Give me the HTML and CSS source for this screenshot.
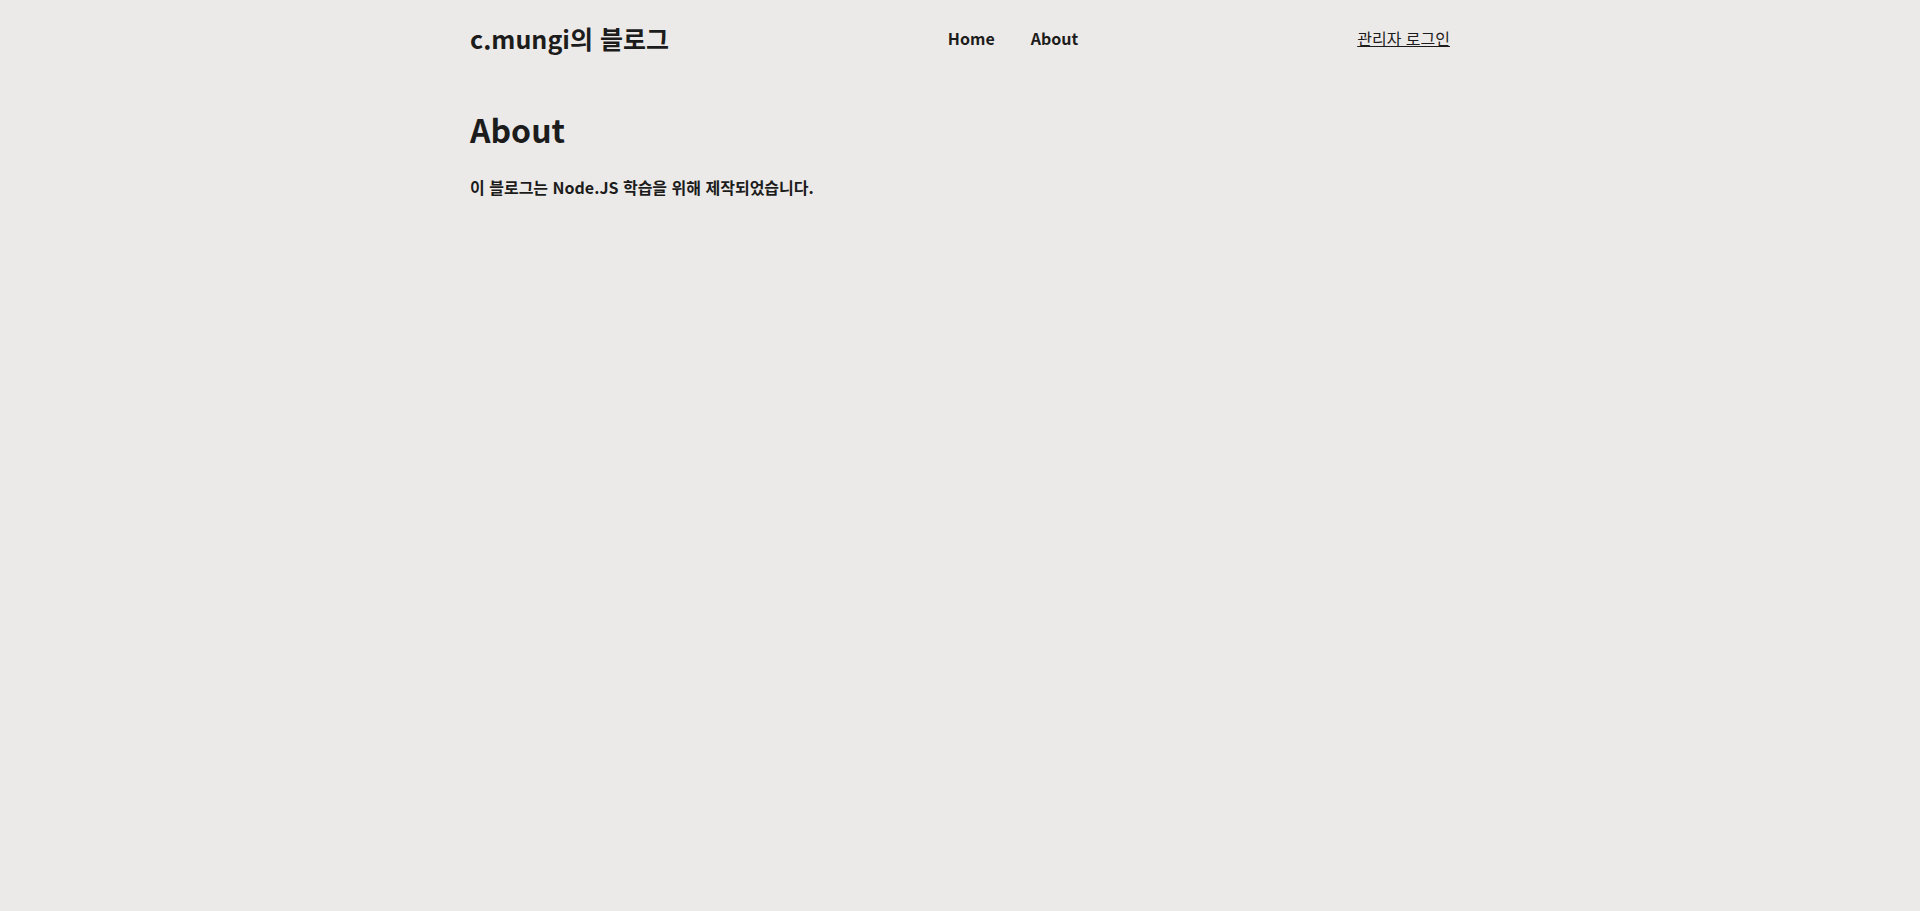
FILE: index.html
```html
<!DOCTYPE html>
<html lang="ko">
<head>
<meta charset="utf-8">
<title>About</title>
<link rel="stylesheet" href="styles.css">
</head>
<body>
<div class="container">
  <header class="header">
    <a class="logo" href="#">c.mungi의 블로그</a>
    <nav class="nav">
      <a href="#">Home</a>
      <a href="#">About</a>
    </nav>
    <a class="login" href="#">관리자 로그인</a>
  </header>
  <main class="main">
    <h1 class="title">About</h1>
    <p class="desc">이 블로그는 Node.JS 학습을 위해 제작되었습니다.</p>
  </main>
</div>
</body>
</html>
```
FILE: styles.css
```css
* { box-sizing: border-box; }
html, body { margin: 0; padding: 0; }
body {
  background: #eceae8;
  color: #1c1c1c;
  font-family: "Noto Sans CJK KR", "Noto Sans", sans-serif;
  min-height: 100vh;
}
a { color: inherit; text-decoration: none; }
.container {
  max-width: 980px;
  margin: 0 auto;
}
.header {
  display: flex;
  justify-content: space-between;
  align-items: center;
  height: 76px;
}
.logo {
  font-size: 25px;
  font-weight: 700;
}
.nav {
  display: flex;
  gap: 36px;
  font-size: 16px;
  font-weight: 700;
}
.login {
  font-size: 16px;
  text-decoration: underline;
}
.main { padding-top: 30px; }
.title {
  font-size: 32px;
  font-weight: 700;
  margin: 0 0 23px;
}
.desc {
  font-size: 16px;
  font-weight: 700;
  margin: 0;
}
```
